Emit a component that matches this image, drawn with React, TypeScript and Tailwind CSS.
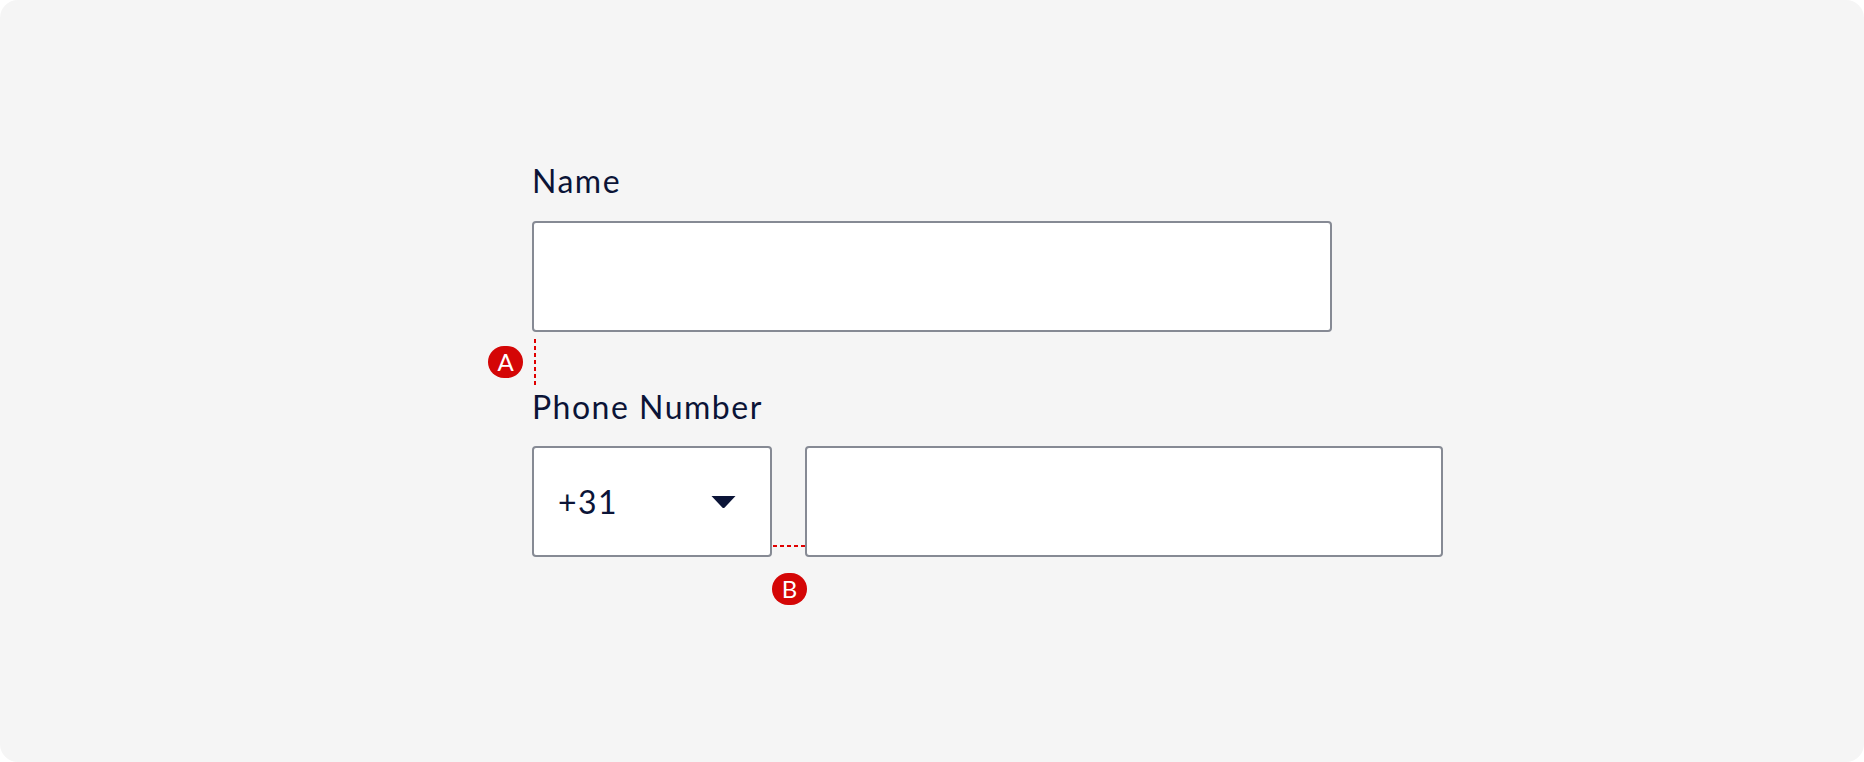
import React from "react";

const font = { fontFamily: "Lato, 'Noto Sans', sans-serif" };

function Badge({ letter }: { letter: string }) {
  return (
    <div className="flex h-[32px] w-[35px] items-center justify-center rounded-full bg-[#d40606] text-[24px] leading-none text-white">
      {letter}
    </div>
  );
}

export default function App() {
  return (
    <div className="h-[762px] w-[1864px] bg-white" style={font}>
      <div className="h-full w-full rounded-[18px] bg-[#f5f5f5] pl-[532px] pt-[161px] text-[#0b1437]">
        <div className="text-[32px] leading-[40px] tracking-[1.5px]">Name</div>
        <div className="mt-[20px] h-[111px] w-[800px] rounded-[4px] border-2 border-[#868a94] bg-white" />

        <div className="relative h-[55px]">
          <div className="absolute left-[2px] top-[7px] h-[48px] w-[2px] bg-[repeating-linear-gradient(to_bottom,#e00000_0_4px,transparent_4px_7px)]" />
          <div className="absolute left-[-44px] top-[14px]">
            <Badge letter="A" />
          </div>
        </div>

        <div className="text-[32px] leading-[40px] tracking-[1.5px]">Phone Number</div>
        <div className="mt-[19px] flex items-start">
          <div className="flex h-[111px] w-[240px] items-center justify-between rounded-[4px] border-2 border-[#868a94] bg-white pl-[24px] pr-[34px]">
            <span className="text-[32px] leading-[40px] tracking-[1.5px]">+31</span>
            <svg width="25" height="14" viewBox="0 0 25 14">
              <path d="M0.5 1 H24.5 L13.7 12.4 Q12.5 13.6 11.3 12.4 Z" fill="#0b1437" />
            </svg>
          </div>
          <div className="relative h-[111px] w-[33px]">
            <div className="absolute left-[1px] right-0 top-[99px] h-[2px] bg-[repeating-linear-gradient(to_right,#e00000_0_4px,transparent_4px_7px)]" />
            <div className="absolute left-[0px] top-[127px]">
              <Badge letter="B" />
            </div>
          </div>
          <div className="h-[111px] w-[638px] rounded-[4px] border-2 border-[#868a94] bg-white" />
        </div>
      </div>
    </div>
  );
}
